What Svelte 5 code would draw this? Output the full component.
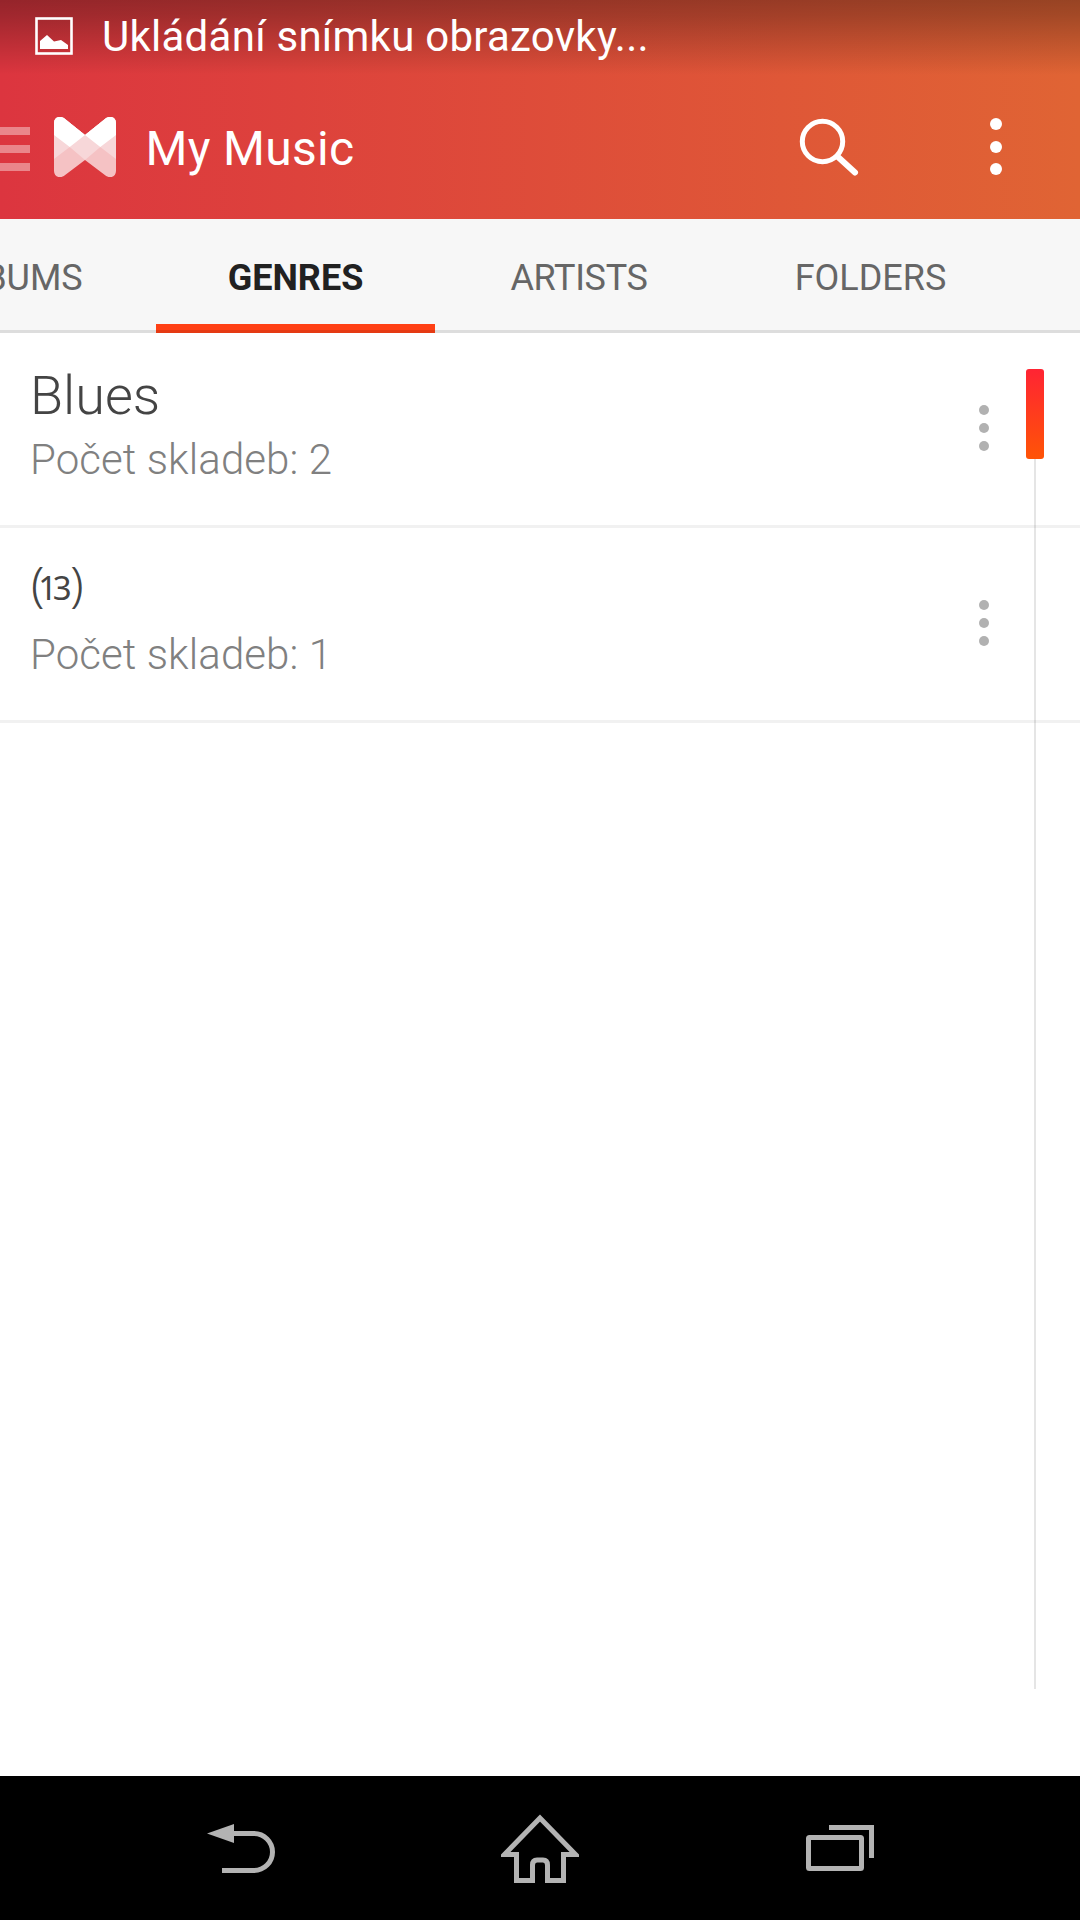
<script lang="ts">
  interface Genre {
    name: string
    count: number
    code?: boolean
  }

  const tabs = ['ALBUMS', 'GENRES', 'ARTISTS', 'FOLDERS']
  let activeTab = $state('GENRES')

  // Untitled genres only carry their numeric code
  const genres: Genre[] = [
    { name: 'Blues', count: 2 },
    { name: '13', count: 1, code: true }
  ]
</script>

<div class="screen">
  <header>
    <div class="status-bar">
      <svg class="status-icon" width="38" height="38" viewBox="0 0 38 38">
        <rect x="1.5" y="1.5" width="35" height="35" fill="none" stroke="#fff" stroke-width="2.6" />
        <path d="M5 32V24L12 18L19 24.500L26 23L33 28V32Z" fill="#fff" />
      </svg>
      <span>Ukládání snímku obrazovky...</span>
    </div>
    <div class="action-bar">
      <button class="drawer" aria-label="Menu"><i></i><i></i><i></i></button>
      <svg class="logo" width="62" height="60" viewBox="0 0 63 60" preserveAspectRatio="none">
        <clipPath id="logo-shape">
          <path d="M0 6C0 1 5-2 10 1L31.500 18L53 1C58-2 63 1 63 6V54C63 59 58 62 53 59L31.500 43L10 59C5 62 0 59 0 54Z" />
        </clipPath>
        <g clip-path="url(#logo-shape)">
          <rect width="63" height="60" fill="#f5c2c4" />
          <path d="M0 0H63V42L47 30L31.500 43L16 30L0 42Z" fill="#f7d7d9" />
          <path d="M0 0H63V18L47 30L31.500 18L16 30L0 18Z" fill="#fff" />
        </g>
      </svg>
      <h1>My Music</h1>
      <button class="search" aria-label="Search">
        <svg width="60" height="60" viewBox="0 0 60 60">
          <circle cx="23.500" cy="24.500" r="20.200" fill="none" stroke="#fff" stroke-width="5" />
          <path d="M38.500 39.500L56 55.500" stroke="#fff" stroke-width="6" stroke-linecap="round" />
        </svg>
      </button>
      <button class="overflow" aria-label="More"><i></i><i></i><i></i></button>
    </div>
  </header>

  <nav class="tabs">
    {#each tabs as tab}
      <button class:active={activeTab === tab} onclick={() => activeTab = tab}>{tab}</button>
    {/each}
  </nav>

  <main>
    {#each genres as genre}
      <div class="row">
        <div class="info">
          {#if genre.code}
            <div class="name code">(<span>{genre.name}</span>)</div>
          {:else}
            <div class="name">{genre.name}</div>
          {/if}
          <div class="count">Počet skladeb: {genre.count}</div>
        </div>
        <button class="row-menu" aria-label="Options"><i></i><i></i><i></i></button>
      </div>
    {/each}
    <div class="scroll-track"><div class="scroll-thumb"></div></div>
  </main>

  <footer>
    <svg width="70" height="50" viewBox="0 0 70 50">
      <path d="M0 9.500L27 0V19Z" fill="#b3b3b3" />
      <path d="M26 9.500H47A18.500 18.500 0 0 1 47 46.500H15" fill="none" stroke="#b3b3b3" stroke-width="5" />
    </svg>
    <svg width="78" height="70" viewBox="0 0 78 70">
      <path d="M39 4L3.500 40.500H15.500V66.500H31.500V51Q31.500 46 36 46H42Q46.500 46 46.500 51V66.500H62.500V40.500H74.500Z" fill="none" stroke="#b3b3b3" stroke-width="5" />
    </svg>
    <svg width="68" height="47" viewBox="0 0 68 47">
      <rect x="2.500" y="12.500" width="53" height="31" rx="1" fill="none" stroke="#b3b3b3" stroke-width="5" />
      <path d="M23 2.500H65.500V33" fill="none" stroke="#b3b3b3" stroke-width="5" />
    </svg>
  </footer>
</div>

<style>
  :global(body) {
    margin: 0;
    background: #fff;
  }

  .screen {
    display: flex;
    flex-direction: column;
    width: 1080px;
    height: 1920px;
    overflow: hidden;
    background: #fff;
    font-family: Roboto, 'Noto Sans', sans-serif;
  }

  button {
    margin: 0;
    padding: 0;
    border: 0;
    background: none;
    font: inherit;
  }

  i {
    display: block;
  }

  header {
    height: 219px;
    background:
      linear-gradient(rgba(0, 0, 0, 0.32), rgba(0, 0, 0, 0.27) 15px, transparent 75px),
      linear-gradient(to right, #dc353f, #e06434);
    color: #fff;
  }

  .status-bar {
    display: flex;
    align-items: center;
    height: 75px;
    padding-left: 35px;
    box-sizing: border-box;
    font-size: 42px;
    line-height: 74px;
    letter-spacing: 0.26px;
  }

  .status-icon {
    margin: 0 29px 3px 0;
  }

  .status-bar span {
    height: 75px;
  }

  .action-bar {
    display: flex;
    align-items: center;
    height: 144px;
  }

  .drawer {
    display: grid;
    gap: 10px;
    width: 30px;
    margin-top: 4px;
  }

  .drawer i {
    height: 8px;
    background: rgba(255, 255, 255, 0.4);
  }

  .logo {
    margin-left: 24px;
  }

  h1 {
    flex: 1;
    margin: 3px 0 0 29.500px;
    font-size: 48px;
    font-weight: 400;
    line-height: 56px;
    letter-spacing: 0.3px;
  }

  .search {
    width: 60px;
    height: 60px;
    margin-right: 131px;
  }

  .search svg {
    display: block;
  }

  .overflow {
    display: grid;
    gap: 10.500px;
    margin: 0 78px 1px 0;
  }

  .overflow i {
    width: 12px;
    height: 12px;
    border-radius: 50%;
    background: #fff;
  }

  .tabs {
    display: flex;
    height: 114px;
    margin-left: -132px;
    background: #f7f7f7;
    box-shadow: inset 0 -3px #ddd;
  }

  .tabs button {
    width: 288px;
    padding-top: 4px;
    color: #666;
    font-size: 36px;
    line-height: 42px;
  }

  .tabs button:nth-child(3) {
    letter-spacing: -0.35px;
  }

  .tabs button:nth-child(4) {
    width: 295px;
  }

  .tabs button.active {
    width: 279px;
    background: linear-gradient(#ff4015, #ff4015) 0 105px / 100% 6px no-repeat,
      linear-gradient(#e53a13, #e53a13) 0 111px / 100% 3px no-repeat;
    color: #212121;
    font-weight: 700;
  }

  main {
    position: relative;
    flex: 1;
  }

  .row {
    display: flex;
    justify-content: space-between;
    align-items: center;
    height: 195px;
    padding: 0 91px 0 30px;
    box-sizing: border-box;
    border-bottom: 3px solid #f1f1f1;
  }

  .info {
    height: 132px;
  }

  .name {
    height: 72px;
    color: #444;
    font-size: 54px;
    font-weight: 300;
    line-height: 65px;
  }

  .code {
    padding-left: 1px;
    font-family: 'Noto Sans', 'Open Sans', sans-serif;
    font-size: 48px;
    line-height: 49px;
  }

  .code span {
    margin: 0 3px 0 -6px;
    font-size: 33px;
    font-weight: 400;
    letter-spacing: -4.500px;
    vertical-align: 1px;
  }

  .count {
    color: #808080;
    font-size: 42px;
    font-weight: 300;
    line-height: 50px;
    letter-spacing: 0.08px;
  }

  .row-menu {
    display: grid;
    gap: 8px;
    margin-bottom: 2px;
  }

  .row-menu i {
    width: 10px;
    height: 10px;
    border-radius: 50%;
    background: #b1b1b1;
  }

  .scroll-track {
    position: absolute;
    top: 36px;
    right: 44px;
    width: 2px;
    height: 1320px;
    background: rgba(0, 0, 0, 0.1);
  }

  .scroll-thumb {
    width: 18px;
    height: 90px;
    margin-left: -8px;
    border-radius: 3px;
    background: linear-gradient(#ff2433, #ff5406);
  }

  footer {
    display: flex;
    height: 144px;
    background: #000;
  }

  footer svg:nth-child(1) {
    margin: 48px 0 0 207px;
  }

  footer svg:nth-child(2) {
    margin: 38px 0 0 224px;
  }

  footer svg:nth-child(3) {
    margin: 49px 0 0 227px;
  }
</style>
